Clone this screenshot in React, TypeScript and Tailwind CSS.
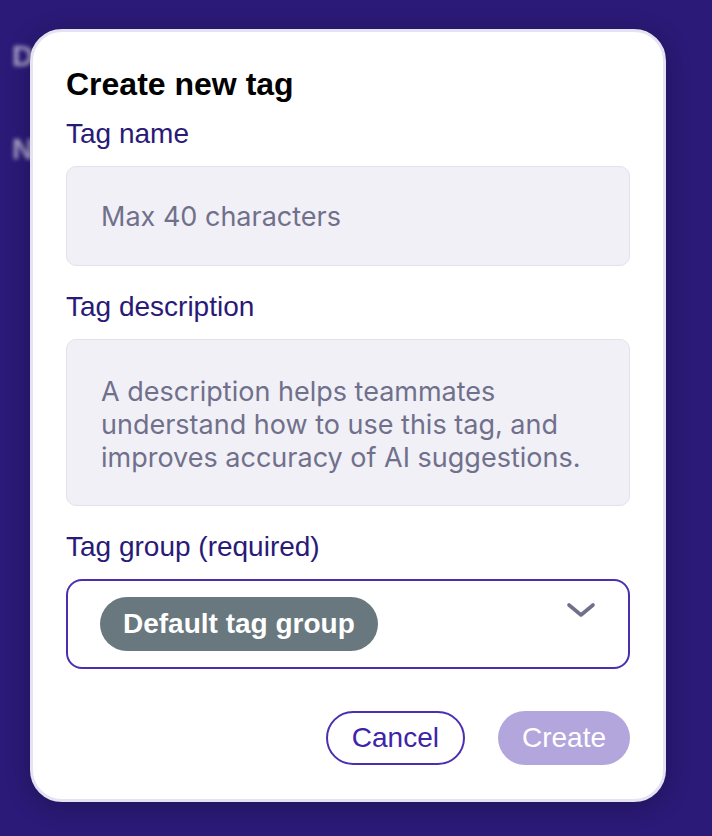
import React from "react";

const sans = "font-['Liberation_Sans',Arial,sans-serif]";
const inter = "font-['Inter','Noto_Sans',sans-serif]";

function Chevron() {
  return (
    <svg width="32" height="20" viewBox="0 0 32 20" fill="none" className="mt-[4px] -mr-[1px] shrink-0">
      <path d="M4 4 L16 14 L28 4" stroke="#70708a" strokeWidth="3.6" strokeLinecap="round" strokeLinejoin="round" />
    </svg>
  );
}

function Label({ children }: { children: React.ReactNode }) {
  return <div className={`${sans} text-[28px] leading-[32px] text-[#2a1a78]`}>{children}</div>;
}

export default function App() {
  return (
    <div className="relative h-[836px] w-[712px] overflow-hidden bg-[#2b1a77]">
      <div className={`${sans} pl-[12px] pt-[38px] text-[30px] font-bold text-white/60 blur-[2px]`}>
        <div className="leading-[36px]">D</div>
        <div className="mt-[57px] leading-[36px]">N</div>
      </div>

      <div className="absolute left-[30px] top-[29px] w-[636px] h-[773px] rounded-[32px] border-[3px] border-[#e4e3f1] bg-white px-[33px] pt-[34px] shadow-[0_4px_24px_rgba(0,0,0,0.25)]">
        <h1 className={`${sans} text-[32px] leading-[36px] font-bold text-black`}>Create new tag</h1>

        <div className="mt-[16px]">
          <Label>Tag name</Label>
          <div className={`${inter} mt-[16px] h-[100px] rounded-[10px] border border-[#e2e2ee] bg-[#f0f0f6] px-[34px] pt-[2px] flex items-center text-[27px] text-[#71708c]`}>
            Max 40 characters
          </div>
        </div>

        <div className="mt-[25px]">
          <Label>Tag description</Label>
          <div className={`${inter} mt-[16px] h-[167px] rounded-[10px] border border-[#e2e2ee] bg-[#f0f0f6] px-[34px] pt-[35px] text-[27px] leading-[33px] text-[#71708c]`}>
            A description helps teammates understand how to use this tag, and improves accuracy of AI suggestions.
          </div>
        </div>

        <div className="mt-[25px]">
          <Label>Tag group (required)</Label>
          <div className="mt-[16px] h-[90px] rounded-[16px] border-2 border-[#4a2fb0] pl-[32px] pr-[32px] pt-[16px] flex items-start justify-between">
            <span className={`${sans} h-[54px] rounded-full bg-[#69777e] px-[23px] flex items-center text-[28px] font-bold text-white`}>
              Default tag group
            </span>
            <Chevron />
          </div>
        </div>

        <div className="mt-[42px] flex justify-end gap-[33px]">
          <button className={`${sans} h-[54px] rounded-full border-2 border-[#4a2fb0] bg-white px-[24px] text-[28px] text-[#3e24a8]`}>
            Cancel
          </button>
          <button className={`${sans} h-[54px] rounded-full border-2 border-transparent bg-[#b3a6dc] px-[22px] text-[28px] text-white`}>
            Create
          </button>
        </div>
      </div>
    </div>
  );
}
